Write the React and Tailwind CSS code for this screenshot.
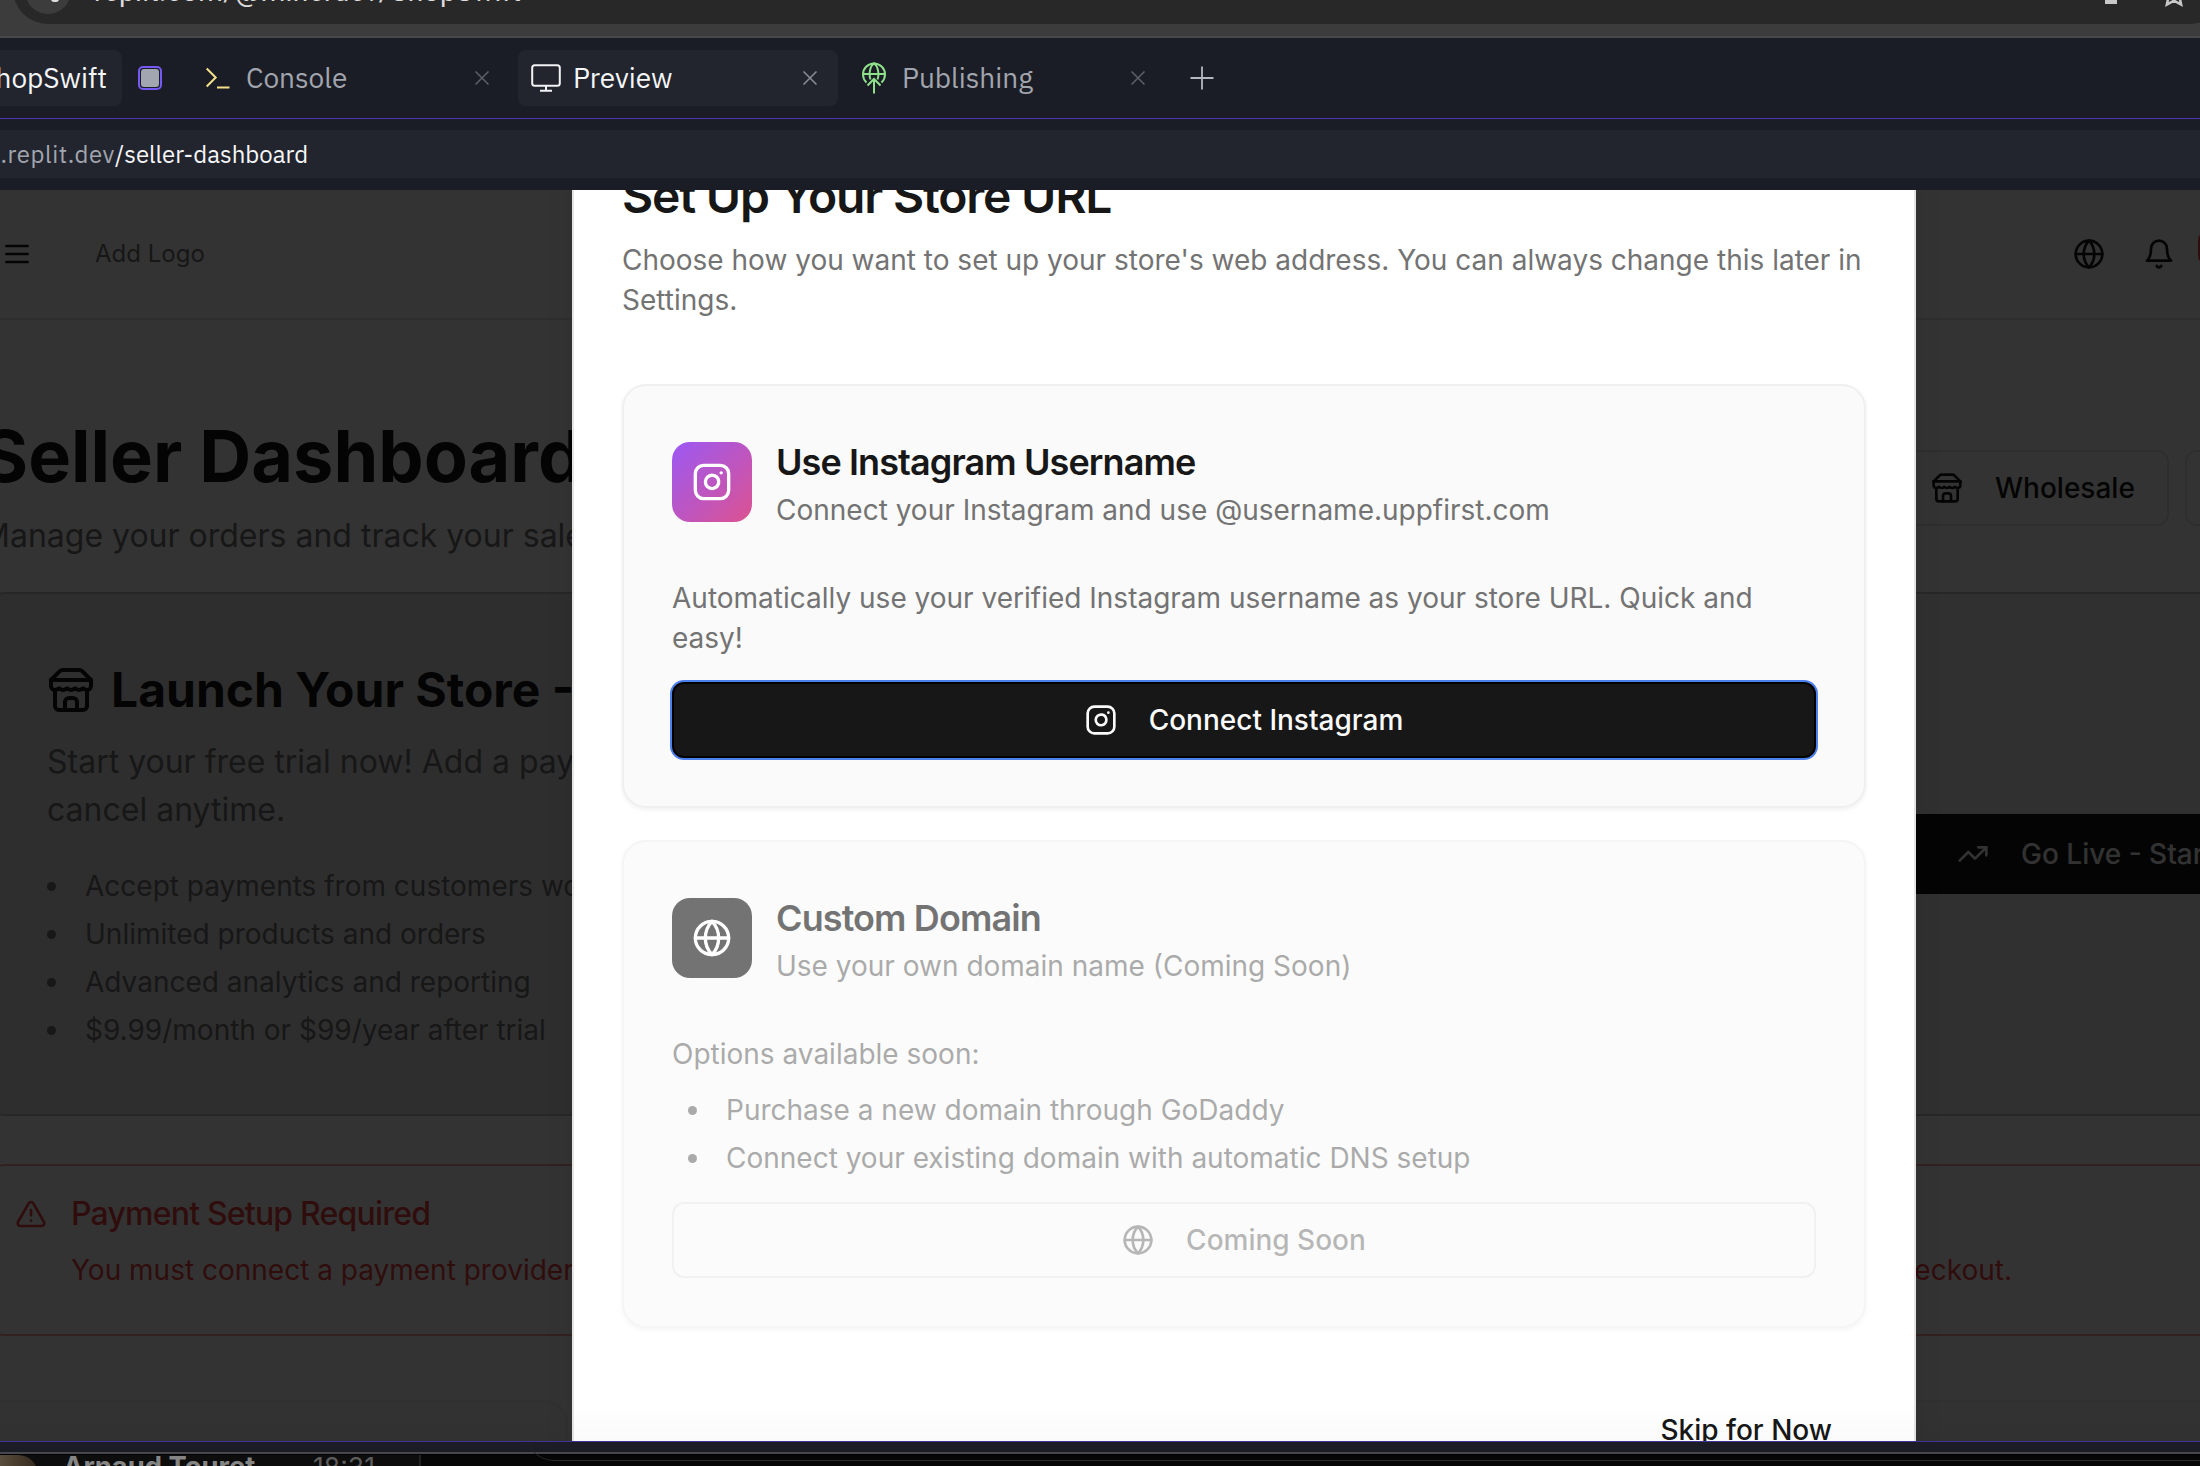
import React from "react";

function Icon({ className, children, width = 2 }) {
  return (
    <svg
      viewBox="0 0 24 24"
      fill="none"
      stroke="currentColor"
      strokeWidth={width}
      strokeLinecap="round"
      strokeLinejoin="round"
      className={"shrink-0 " + className}
    >
      {children}
    </svg>
  );
}

const Instagram = ({ className }) => (
  <Icon className={className}>
    <rect width="20" height="20" x="2" y="2" rx="5" ry="5" />
    <path d="M16 11.37A4 4 0 1 1 12.63 8 4 4 0 0 1 16 11.37z" />
    <line x1="17.5" x2="17.51" y1="6.5" y2="6.5" />
  </Icon>
);

const Globe = ({ className }) => (
  <Icon className={className}>
    <circle cx="12" cy="12" r="10" />
    <path d="M12 2a14.5 14.5 0 0 0 0 20 14.5 14.5 0 0 0 0-20" />
    <path d="M2 12h20" />
  </Icon>
);

const Store = ({ className }) => (
  <Icon className={className}>
    <path d="m2 7 4.41-4.41A2 2 0 0 1 7.83 2h8.34a2 2 0 0 1 1.42.59L22 7" />
    <path d="M4 12v8a2 2 0 0 0 2 2h12a2 2 0 0 0 2-2v-8" />
    <path d="M15 22v-4a2 2 0 0 0-2-2h-2a2 2 0 0 0-2 2v4" />
    <path d="M2 7h20" />
    <path d="M22 7v3a2 2 0 0 1-2 2a2.7 2.7 0 0 1-1.59-.63.7.7 0 0 0-.82 0A2.7 2.7 0 0 1 16 12a2.7 2.7 0 0 1-1.59-.63.7.7 0 0 0-.82 0A2.7 2.7 0 0 1 12 12a2.7 2.7 0 0 1-1.59-.63.7.7 0 0 0-.82 0A2.7 2.7 0 0 1 8 12a2.7 2.7 0 0 1-1.59-.63.7.7 0 0 0-.82 0A2.7 2.7 0 0 1 4 12a2 2 0 0 1-2-2V7" />
  </Icon>
);

const Close = ({ className }) => (
  <svg viewBox="0 0 14 14" fill="none" stroke="currentColor" strokeWidth="1.5" className={"h-3.5 w-3.5 shrink-0 " + className}>
    <path d="M0.5 0.5 13.5 13.5M13.5 0.5 0.5 13.5" />
  </svg>
);

function BrowserBar() {
  return (
    <div className="flex h-[38px] items-start overflow-hidden border-b-2 border-[#484848] bg-[#3c3c3c]">
      <div className="-mt-[46px] ml-[13px] flex h-[70px] w-[2212px] shrink-0 items-center rounded-full bg-[#282828] text-[#dcdcdc]">
        <div className="mt-[4px] ml-[12px] h-[46px] w-[46px] shrink-0 rounded-full bg-[#3c3c3c]">
          <div className="mt-[31px] ml-[26px] h-[3px] w-[8px] rounded-b-full bg-[#e0e0e0]" />
        </div>
        <span className="mt-[5px] ml-[23px] font-['Roboto',sans-serif] text-[28px] leading-[40px] tracking-[0.4px] whitespace-nowrap">
          replit.com/@minerdev/ShopSwift
        </span>
        <div className="mt-[20px] mr-[43px] ml-auto h-[10px] w-3 bg-[#c8c8c8]" />
        <svg viewBox="0 0 24 24" fill="none" stroke="#c8c8c8" strokeWidth="2.2" className="mt-[10px] mr-[37px] h-7 w-7">
          <path d="M12 2.5l2.9 6.3 6.9.8-5.1 4.7 1.4 6.8L12 17.7l-6.1 3.4 1.4-6.8L2.200 9.600l6.900-.8z" />
        </svg>
      </div>
    </div>
  );
}

function TabBar() {
  return (
    <div className="flex h-[81px] items-center border-b border-[#4a35b5] bg-[#1a1d25] font-['IBM_Plex_Sans',Roboto,sans-serif] text-[28px] text-[#a2a5ae]">
      <div className="flex h-14 w-[122px] items-center justify-end rounded-r-lg bg-[#22252e] pr-[15px] whitespace-nowrap text-[#f5f6f8]">
        ShopSwift
      </div>
      <div className="ml-4 flex h-6 w-6 items-center justify-center rounded-[5px] border-2 border-[#7559f2] bg-[#1a1d25]">
        <div className="h-[18px] w-[18px] rounded-[3px] bg-[#a2a6b0]" />
      </div>
      <div className="flex h-14 w-[356px] items-center pr-[29px] pl-11">
        <svg viewBox="0 0 24 22" fill="none" stroke="#f5e18a" strokeWidth="2" className="h-[22px] w-6 shrink-0">
          <path d="M0.700 1.500 9.700 10.500 0.700 19.500M11 20.500H23.500" />
        </svg>
        <span className="ml-[16px]">Console</span>
        <Close className="ml-auto text-[#5c606b]" />
      </div>
      <div className="flex h-14 w-[320px] items-center rounded-lg bg-[#22252e] pr-[21px] pl-[13px]">
        <svg viewBox="0 0 30 28" fill="none" stroke="#f1f2f4" strokeWidth="2" className="h-7 w-[30px] shrink-0">
          <rect x="1.200" y="1.200" width="27.600" height="20.600" rx="2.500" />
          <path d="M15 22v4.500M9 26.700h12" />
        </svg>
        <span className="ml-[12px] text-[#f5f6f8]">Preview</span>
        <Close className="ml-auto text-[#8b8e98]" />
      </div>
      <div className="ml-2 flex h-14 w-[320px] items-center pr-[21px] pl-[16px]">
        <svg viewBox="0 0 24 32" fill="none" stroke="#8fe08a" strokeWidth="2" className="h-8 w-6 shrink-0">
          <path d="M4.500 20.500A11 11 0 1 1 19.500 20.500" />
          <path d="M1 12h22M8.500 17.500C6.500 12 8 4 12 1.200C16 4 17.500 12 15.500 17.500" />
          <path d="M12 31.500V17M5.500 23.500 12 17l6.500 6.500" />
        </svg>
        <span className="ml-[16px]">Publishing</span>
        <Close className="ml-auto text-[#5c606b]" />
      </div>
      <svg viewBox="0 0 24 24" fill="none" stroke="#b5b8c0" strokeWidth="1.800" className="ml-[24px] h-6 w-6 shrink-0">
        <path d="M12 0.500v23M0.500 12h23" />
      </svg>
    </div>
  );
}

function UrlBar() {
  return (
    <div className="h-[71px] bg-[#1a1d25] pt-[11px]">
      <div className="flex h-12 items-center bg-[#22252e] font-['IBM_Plex_Sans',Roboto,sans-serif] text-[24px]">
        <span className="flex w-[115px] justify-end tracking-[0.600px] whitespace-nowrap text-[#a2a5ae]">.replit.dev</span>
        <span className="text-[#f5f6f8]">/seller-dashboard</span>
      </div>
    </div>
  );
}

const perks = [
  "Accept payments from customers worldwide",
  "Unlimited products and orders",
  "Advanced analytics and reporting",
  "$9.99/month or $99/year after trial",
];

function Dashboard() {
  return (
    <div className="w-[2600px] bg-white text-[#171717]">
      <header className="flex h-[130px] items-center border-b-2 border-[#e5e5e5]">
        <Icon className="ml-px h-8 w-8">
          <path d="M4 6h16M4 12h16M4 18h16" />
        </Icon>
        <span className="ml-[62px] w-[1978px] text-[24px] text-[#737373]">Add Logo</span>
        <Globe className="h-8 w-8" />
        <Icon className="ml-[38px] h-8 w-8">
          <path d="M6 8a6 6 0 0 1 12 0c0 7 3 9 3 9H3s3-2 3-9" />
          <path d="M10.300 21a1.940 1.940 0 0 0 3.400 0" />
        </Icon>
        <div className="mb-[12px] ml-[23px] h-8 w-10 rounded-lg bg-[#ef4444]" />
      </header>

      <main className="-ml-[19px] pt-24">
        <div className="flex items-center">
          <div className="w-[1916px]">
            <h1 className="text-[72px] leading-[80px] font-bold">Seller Dashboard</h1>
            <p className="mt-4 text-[32px] leading-[48px] text-[#737373]">Manage your orders and track your sales</p>
          </div>
          <div className="flex h-[76px] w-[272px] shrink-0 items-center gap-8 rounded-xl border-2 border-[#e5e5e5] px-8 text-[28px] font-medium">
            <Store className="h-8 w-8" />
            Wholesale
          </div>
          <div className="ml-4 h-[76px] w-[272px] rounded-xl border-2 border-[#e5e5e5]" />
        </div>

        <section className="mt-8 flex h-[524px] items-center rounded-3xl border-2 border-[#c4c4c4] bg-linear-to-r/srgb from-[#e4e4e4] to-[#f2f2f2] px-16">
          <div className="w-[1846px] shrink-0">
            <h2 className="flex h-16 items-center gap-4 text-[48px] font-bold">
              <Store className="h-12 w-12" />
              Launch Your Store - Free Trial
            </h2>
            <p className="mt-4 text-[32px] leading-[48px] text-[#737373]">
              Start your free trial now! Add a payment method and
              <br />
              cancel anytime.
            </p>
            <ul className="mt-8 flex flex-col gap-2 text-[28px] leading-[40px] text-[#737373]">
              {perks.map((p) => (
                <li key={p} className="flex items-center">
                  <span className="mr-[29px] h-[9px] w-[9px] rounded-full bg-current" />
                  {p}
                </li>
              ))}
            </ul>
          </div>
          <div className="flex h-20 w-[560px] shrink-0 items-center gap-8 bg-[#171717] pl-16 text-[28px] font-medium text-[#fafafa]">
            <Icon className="h-8 w-8">
              <path d="M22 7 13.500 15.500 8.500 10.500 2 17" />
              <path d="M16 7h6v6" />
            </Icon>
            Go Live - Start Free Trial
          </div>
        </section>

        <section className="mt-12 flex h-[172px] gap-6 rounded-3xl border-2 border-[#ef4444]/50 p-8 text-[#ef4444]">
          <Icon className="h-8 w-8">
            <path d="m21.730 18-8-14a2 2 0 0 0-3.480 0l-8 14A2 2 0 0 0 4 21h16a2 2 0 0 0 1.730-3" />
            <path d="M12 9v4M12 17h.01" />
          </Icon>
          <div className="w-[1941px]">
            <h3 className="text-[32px] leading-none font-medium tracking-tight">Payment Setup Required</h3>
            <p className="mt-[17px] flex justify-between text-[28px] leading-[46px]">
              <span>You must connect a payment provider</span>
              <span>checkout.</span>
            </p>
          </div>
        </section>

        <div className="mt-16 flex gap-12">
          <div className="h-[200px] w-[587px] rounded-3xl border-2 border-[#eeeeee] bg-[#fafafa]" />
          <div className="h-[200px] w-[587px] rounded-3xl border-2 border-[#eeeeee] bg-[#fafafa]" />
          <div className="h-[200px] w-[1260px] rounded-3xl border-2 border-[#eeeeee] bg-[#fafafa]" />
        </div>
      </main>
    </div>
  );
}

function OptionHeader({ tile, title, text }) {
  return (
    <div className="flex items-center gap-6">
      {tile}
      <div>
        <h3 className="text-[36px] leading-[56px] font-semibold tracking-tight">{title}</h3>
        <p className="text-[28px] leading-[40px] text-[#737373]">{text}</p>
      </div>
    </div>
  );
}

function StoreUrlDialog() {
  return (
    <div className="absolute -top-[68px] left-[572px] w-[1344px] border-2 border-[#e5e5e5] bg-white p-12 text-[#171717] shadow-[0_20px_30px_-6px_rgba(0,0,0,0.100)]">
      <h2 className="text-[48px] leading-none font-semibold tracking-tight">Set Up Your Store URL</h2>
      <p className="mt-5 text-[28px] leading-[40px] text-[#737373]">
        Choose how you want to set up your store's web address. You can always change this later in Settings.
      </p>

      <div className="mt-16 rounded-3xl border-2 border-[#f0f0f0] bg-[#fafafa] p-12 shadow-[0_2px_4px_0_rgba(0,0,0,0.060)]">
        <OptionHeader
          tile={
            <div className="flex h-20 w-20 items-center justify-center rounded-[18px] bg-linear-to-br/srgb from-[#9c59f5] to-[#dc5290] text-white">
              <Instagram className="h-10 w-10" />
            </div>
          }
          title="Use Instagram Username"
          text="Connect your Instagram and use @username.uppfirst.com"
        />
        <p className="mt-12 text-[28px] leading-[40px] text-[#737373]">
          Automatically use your verified Instagram username as your store URL. Quick and easy!
        </p>
        <button className="mt-6 flex h-[76px] w-full items-center justify-center gap-8 rounded-xl border-2 border-black bg-[#171717] text-[28px] font-medium text-[#fafafa] ring-2 ring-[#4b80ee]">
          <Instagram className="h-8 w-8" />
          Connect Instagram
        </button>
      </div>

      <div className="mt-8 rounded-3xl border-2 border-[#f0f0f0] bg-[#fafafa] p-12 opacity-60 shadow-[0_2px_4px_0_rgba(0,0,0,0.060)]">
        <OptionHeader
          tile={
            <div className="flex h-20 w-20 items-center justify-center rounded-[18px] bg-[#171717] text-white">
              <Globe className="h-10 w-10" />
            </div>
          }
          title="Custom Domain"
          text="Use your own domain name (Coming Soon)"
        />
        <p className="mt-12 text-[28px] leading-[40px] text-[#737373]">Options available soon:</p>
        <ul className="mt-4 ml-4 flex flex-col gap-2 text-[28px] leading-[40px] text-[#737373]">
          {["Purchase a new domain through GoDaddy", "Connect your existing domain with automatic DNS setup"].map((t) => (
            <li key={t} className="flex items-center">
              <span className="mr-[29px] h-[9px] w-[9px] rounded-full bg-current" />
              {t}
            </li>
          ))}
        </ul>
        <button className="mt-6 flex h-[76px] w-full items-center justify-center gap-8 rounded-xl border-2 border-[#d8d8d8] text-[28px] font-medium opacity-50">
          <Globe className="h-8 w-8" />
          Coming Soon
        </button>
      </div>

      <div className="mt-16 flex h-[76px] items-center justify-end pr-[34px] text-[28px] font-medium">Skip for Now</div>
    </div>
  );
}

function BottomStrip() {
  return (
    <div className="h-[25px] overflow-hidden bg-[#060606]">
      <div className="h-[11px] border-t border-[#40349a] bg-[#1a1c26]" />
      <div className="h-0.5 bg-[#48484c]" />
      <div className="flex h-3 border-t border-black">
        <div className="flex h-11 w-[421px] shrink-0 items-start border-r-2 border-[#222222] bg-[#0d0d0d]">
          <div className="h-11 w-[38px] shrink-0 rounded-tr-[20px] bg-linear-to-r from-[#5a4e3c] to-[#33291d]" />
          <span className="-mt-[6px] ml-[25px] w-[250px] shrink-0 text-[27.400px] leading-[34px] font-bold whitespace-nowrap text-[#858585]">
            Arnaud Touret
          </span>
          <span className="-mt-[5px] text-[26.500px] leading-[34px] text-[#5c5c5c]">18:31</span>
        </div>
        <div className="-mt-10 ml-[105px] h-[46px] w-[1800px] rounded-bl-[28px] border-b border-[#2c2c2c]" />
      </div>
    </div>
  );
}

export default function App() {
  return (
    <div className="flex h-[1466px] w-[2200px] flex-col overflow-hidden bg-black font-['Inter',sans-serif]">
      <BrowserBar />
      <TabBar />
      <UrlBar />
      <div className="relative h-[1251px] overflow-hidden">
        <Dashboard />
        <div className="absolute inset-0 bg-black/80" />
        <StoreUrlDialog />
        <div className="absolute inset-x-0 bottom-0 h-10 bg-linear-to-b from-black/0 to-black/[0.020]" />
      </div>
      <BottomStrip />
    </div>
  );
}
